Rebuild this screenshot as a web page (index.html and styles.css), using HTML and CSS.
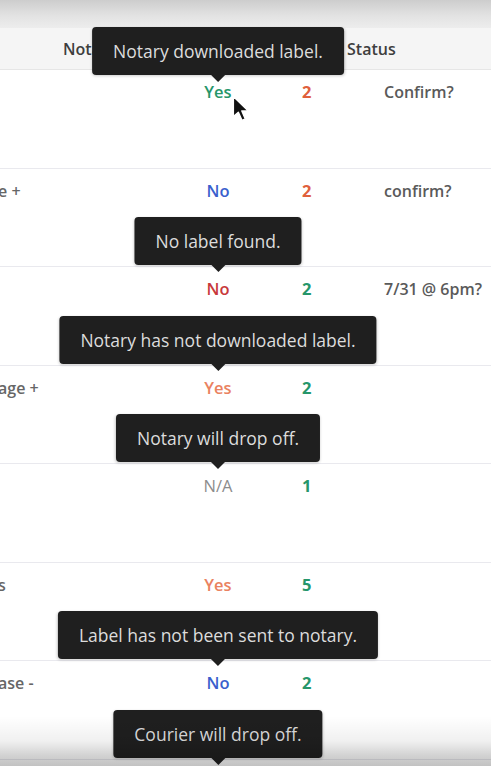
FILE: index.html
```html
<!DOCTYPE html>
<html>
<head>
<meta charset="utf-8">
<link rel="stylesheet" href="styles.css">
</head>
<body>
<div class="screen">
  <div class="topbar"></div>
  <div class="table">
    <div class="row head">
      <div class="cell c0"></div>
      <div class="cell notary">Notary <span class="sort">⇅</span></div>
      <div class="cell label">Label <span class="sort">⇅</span></div>
      <div class="cell docs">Docs</div>
      <div class="cell status">Status</div>
    </div>

    <div class="row">
      <div class="cell c0"></div>
      <div class="cell notary"></div>
      <div class="cell label"><span class="val green">Yes<span class="tip tip-low">Notary downloaded label.</span></span></div>
      <div class="cell docs"><span class="num orange">2</span></div>
      <div class="cell status"><span class="stat">Confirm?</span></div>
    </div>

    <div class="row">
      <div class="cell c0"><span class="side">e +</span></div>
      <div class="cell notary"></div>
      <div class="cell label"><span class="val blue">No</span></div>
      <div class="cell docs"><span class="num orange">2</span></div>
      <div class="cell status"><span class="stat">confirm?</span></div>
    </div>

    <div class="row">
      <div class="cell c0"></div>
      <div class="cell notary"></div>
      <div class="cell label"><span class="val red">No<span class="tip">No label found.</span></span></div>
      <div class="cell docs"><span class="num green">2</span></div>
      <div class="cell status"><span class="stat">7/31 @ 6pm?</span></div>
    </div>

    <div class="row">
      <div class="cell c0"><span class="side">age +</span></div>
      <div class="cell notary"></div>
      <div class="cell label"><span class="val salmon">Yes<span class="tip">Notary has not downloaded label.</span></span></div>
      <div class="cell docs"><span class="num green">2</span></div>
      <div class="cell status"></div>
    </div>

    <div class="row">
      <div class="cell c0"></div>
      <div class="cell notary"></div>
      <div class="cell label"><span class="val gray">N/A<span class="tip">Notary will drop off.</span></span></div>
      <div class="cell docs"><span class="num green">1</span></div>
      <div class="cell status"></div>
    </div>

    <div class="row">
      <div class="cell c0"><span class="side">s</span></div>
      <div class="cell notary"></div>
      <div class="cell label"><span class="val salmon">Yes</span></div>
      <div class="cell docs"><span class="num green">5</span></div>
      <div class="cell status"></div>
    </div>

    <div class="row">
      <div class="cell c0"><span class="side">ase -</span></div>
      <div class="cell notary"></div>
      <div class="cell label"><span class="val blue">No<span class="tip">Label has not been sent to notary.</span></span></div>
      <div class="cell docs"><span class="num green">2</span></div>
      <div class="cell status"></div>
    </div>

    <div class="row">
      <div class="cell c0"></div>
      <div class="cell notary"></div>
      <div class="cell label"><span class="val blue">&nbsp;<span class="tip">Courier will drop off.</span></span></div>
      <div class="cell docs"></div>
      <div class="cell status"></div>
    </div>
  </div>

  <svg class="cursor" width="18" height="28" viewBox="0 0 13 20">
    <path d="M1 1 L1 15.5 L4.6 12.3 L7.2 18.2 L9.6 17.2 L7.1 11.4 L11.8 11.4 Z" fill="#111" stroke="#fff" stroke-width="1" stroke-linejoin="round"/>
  </svg>
  <div class="vignette"></div>
</div>
</body>
</html>
```

FILE: styles.css
```css
* { box-sizing: border-box; }
html, body { margin: 0; padding: 0; }
body {
  background: #ffffff;
  font-family: "Open Sans", "Noto Sans", "DejaVu Sans", sans-serif;
  color: #555;
  width: 491px;
  height: 766px;
  overflow: hidden;
}
.screen {
  position: relative;
  width: 491px;
  height: 766px;
  overflow: hidden;
  background: #fff;
}
.topbar {
  height: 28px;
  background: linear-gradient(#cdcdcd, #e2e2e2 55%, #ededed);
}
.table { display: flex; flex-direction: column; }
.row {
  display: grid;
  grid-template-columns: 60px 130px 56px 94px 1fr;
  height: 98.5px;
  flex-shrink: 0;
  border-bottom: 1px solid #e9e9ee;
}
.row.head {
  height: 42px;
  background: #f5f5f5;
  border-bottom: 1px solid #e6e6e6;
  align-items: center;
  font-size: 16px;
  font-weight: 600;
  color: #3e3e3e;
}
.cell { min-width: 0; }
.row:not(.head) .cell { padding-top: 11px; }
.c0 { overflow: hidden; white-space: nowrap; }
.head .notary { padding-left: 3px; white-space: nowrap; }
.head .label { padding-left: 10px; white-space: nowrap; }
.head .docs { padding-left: 44px; }
.head .status { padding-left: 7px; }
.sort { font-size: 12px; color: #888; }
.side {
  display: block;
  margin-left: -2px;
  font-size: 16px;
  line-height: 22px;
  font-weight: 600;
  color: #666;
}
.label { text-align: center; }
.val {
  position: relative;
  display: inline-block;
  font-size: 16.5px;
  line-height: 22px;
  font-weight: 600;
}
.docs .num {
  display: block;
  padding-left: 56px;
  font-size: 16.5px;
  line-height: 22px;
  font-weight: 700;
}
.status .stat {
  display: block;
  padding-left: 44px;
  font-size: 16px;
  line-height: 22px;
  font-weight: 600;
  color: #5a5a5a;
  white-space: nowrap;
}
.green { color: #26966a; }
.blue { color: #3a5fcd; }
.red { color: #c8383a; }
.salmon { color: #ea8260; }
.orange { color: #e0603c; }
.gray { color: #8c8c8c; font-weight: 400; }

.tip {
  position: absolute;
  left: 50%;
  bottom: calc(100% + 13px);
  transform: translateX(-50%);
  white-space: nowrap;
  background: #1f1f1f;
  color: #dcdcdc;
  font-size: 17.5px;
  font-weight: 400;
  line-height: 22px;
  padding: 13px 21px;
  border-radius: 4px;
  box-shadow: 0 1px 3px rgba(0,0,0,0.2);
  z-index: 2;
}
.tip::after {
  content: "";
  position: absolute;
  left: 50%;
  top: 100%;
  margin-left: -7px;
  border-left: 7px solid transparent;
  border-right: 7px solid transparent;
  border-top: 7px solid #1f1f1f;
}
.tip-low { bottom: calc(100% + 6px); }

.cursor {
  position: absolute;
  left: 232px;
  top: 95px;
  z-index: 3;
}
.vignette {
  position: absolute;
  left: 0;
  right: 0;
  bottom: 0;
  height: 50px;
  background: linear-gradient(rgba(0,0,0,0), rgba(0,0,0,0.06) 50%, rgba(0,0,0,0.18) 80%, rgba(0,0,0,0.24));
  pointer-events: none;
  z-index: 4;
}
```
